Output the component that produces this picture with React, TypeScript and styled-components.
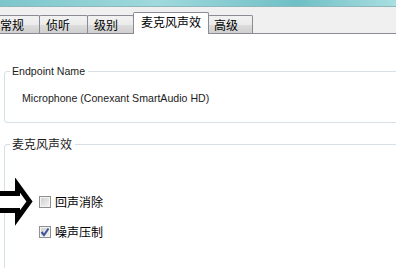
import * as React from 'react';
import styled, { createGlobalStyle } from 'styled-components';

const GlobalStyle = createGlobalStyle`
  html, body {
    margin: 0;
    padding: 0;
    background: #ffffff;
    overflow: hidden;
  }
`;

const uiFont = `'Liberation Sans', 'Noto Sans CJK SC', sans-serif`;
const cjkFont = `'Noto Sans CJK SC', 'Liberation Sans', sans-serif`;

const Window = styled.div`
  position: relative;
  width: 396px;
  height: 268px;
  overflow: hidden;
  background: #ffffff;
  font-family: ${uiFont};
  color: #1b1b1b;
`;

const TitleStrip = styled.div`
  height: 6px;
  background: linear-gradient(90deg, #7cc6cb 0%, #9fd9dc 40%, #6fbfc6 75%, #a9dfe0 100%);
  border-bottom: 1px solid #8fb7bb;
`;

const TabBar = styled.div`
  display: flex;
  align-items: flex-end;
  height: 26px;
  margin-left: -8px;
  background: #f0f0f0;
  border-bottom: 1px solid #898c95;
`;

const Tab = styled.div<{ $width: number; $selected?: boolean; $pad?: number }>`
  box-sizing: border-box;
  width: ${({ $width }) => $width}px;
  height: ${({ $selected }) => ($selected ? 22 : 18)}px;
  margin-bottom: ${({ $selected }) => ($selected ? -1 : 0)}px;
  margin-left: -1px;
  padding-left: ${({ $pad }) => $pad ?? 6}px;
  padding-bottom: ${({ $selected }) => ($selected ? 3 : 0)}px;
  display: flex;
  align-items: center;
  font-family: ${cjkFont};
  font-size: 12px;
  line-height: 14px;
  color: #000000;
  border: 1px solid #898c95;
  border-bottom: none;
  border-radius: 2px 2px 0 0;
  background: ${({ $selected }) =>
    $selected
      ? '#ffffff'
      : 'linear-gradient(#f2f2f2 0%, #ebebeb 50%, #dddddd 51%, #cfcfcf 100%)'};
  position: relative;
  z-index: ${({ $selected }) => ($selected ? 2 : 1)};
`;

const Content = styled.div`
  padding: 31px 0 0 4px;
`;

const GroupBox = styled.fieldset<{ $height: number }>`
  box-sizing: border-box;
  width: 430px;
  height: ${({ $height }) => $height}px;
  margin: 0 0 13px 0;
  padding: 0;
  border: 1px solid #d5dfe5;
  border-radius: 3px;
`;

const Legend = styled.legend<{ $cjk?: boolean }>`
  margin-left: 5px;
  padding: 0 3px 0 2px;
  font-family: ${({ $cjk }) => ($cjk ? cjkFont : uiFont)};
  font-size: ${({ $cjk }) => ($cjk ? 12 : 10.6)}px;
  line-height: ${({ $cjk }) => ($cjk ? 16 : 13)}px;
  color: #1b1b1b;
`;

const DeviceName = styled.div`
  padding: 13px 0 0 17px;
  font-size: 10.6px;
  line-height: 14px;
`;

const OptionList = styled.div`
  display: flex;
  flex-direction: column;
  gap: 17px;
  padding: 43px 0 0 34px;
`;

const OptionRow = styled.label`
  display: flex;
  align-items: center;
  gap: 4px;
  font-family: ${cjkFont};
  font-size: 12px;
  line-height: 13px;
  color: #000000;
`;

const Box = styled.span`
  box-sizing: border-box;
  width: 12px;
  height: 12px;
  border: 1px solid #8f8f8f;
  background: linear-gradient(135deg, #cbcbcb 0%, #e6e6e6 60%, #f4f4f4 100%);
  box-shadow: inset 0 0 0 1px #f4f4f4;
  display: flex;
  align-items: center;
  justify-content: center;
`;

const ArrowMark = styled.svg`
  position: absolute;
  left: 0;
  top: 178px;
`;

const CheckBox = ({ checked }: { checked?: boolean }) => (
  <Box>
    {checked && (
      <svg width="10" height="10" viewBox="0 0 10 10">
        <path d="M1.5 5 L4 8 L8.5 1.5" fill="none" stroke="#3d5595" strokeWidth="2" />
      </svg>
    )}
  </Box>
);

const tabs = [
  { label: '常规', width: 49, pad: 8 },
  { label: '侦听', width: 49, pad: 6 },
  { label: '级别', width: 47, pad: 6 },
  { label: '麦克风声效', width: 76, pad: 7, selected: true },
  { label: '高级', width: 45, pad: 5 },
];

export default function App() {
  return (
    <Window>
      <GlobalStyle />
      <TitleStrip />
      <TabBar>
        {tabs.map((t) => (
          <Tab key={t.label} $width={t.width} $pad={t.pad} $selected={t.selected}>
            {t.label}
          </Tab>
        ))}
      </TabBar>
      <Content>
        <GroupBox $height={58}>
          <Legend>Endpoint Name</Legend>
          <DeviceName>Microphone (Conexant SmartAudio HD)</DeviceName>
        </GroupBox>
        <GroupBox $height={200}>
          <Legend $cjk>麦克风声效</Legend>
          <OptionList>
            <OptionRow>
              <CheckBox />
              回声消除
            </OptionRow>
            <OptionRow>
              <CheckBox checked />
              噪声压制
            </OptionRow>
          </OptionList>
        </GroupBox>
      </Content>
      <ArrowMark width="36" height="48" viewBox="0 0 36 48">
        <path
          d="M-6 15.5 L17.5 15.5 L17.5 7 L29.5 23.5 L17.5 40 L17.5 32.5 L-6 32.5 Z"
          fill="#ffffff"
          stroke="#000000"
          strokeWidth="5"
          strokeLinejoin="miter"
        />
      </ArrowMark>
    </Window>
  );
}
